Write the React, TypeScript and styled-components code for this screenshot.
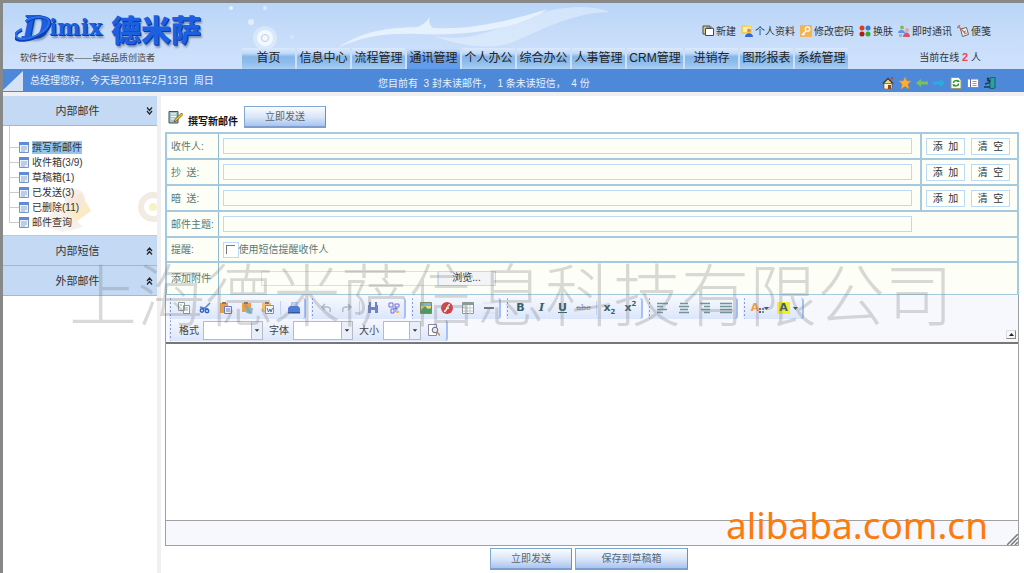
import React from "react";
import styled, { createGlobalStyle } from "styled-components";

const GlobalStyle = createGlobalStyle`
  * { box-sizing: border-box; }
  body {
    margin: 0;
    background: #fff;
    font-family: "Liberation Sans", "Noto Sans CJK SC", sans-serif;
    font-size: 10px;
    line-height: 15px;
    color: #333;
  }
  button, input, select, textarea { font: inherit; color: inherit; margin: 0; }
`;

/* ---------- frame ---------- */

const Page = styled.div`
  position: relative;
  display: flex;
  flex-direction: column;
  min-height: 100vh;
  border-top: 3px solid #888;
  border-left: 3px solid #888;
  background: #f0f0f2;
  overflow: hidden;
`;

const Header = styled.header`
  position: relative;
  display: flex;
  height: 66px;
  background: linear-gradient(#b9d5f8, #c6dcf9 45%, #cfe1fc);
`;

const HeaderArt = styled.svg`
  position: absolute;
  left: 220px;
  top: 0;
`;

const Brand = styled.div`
  width: 239px;
  padding: 4px 0 0 12px;
  flex: none;
`;

const LogoLine = styled.div`
  position: relative;
  display: flex;
  align-items: flex-start;
  height: 42px;
  color: #1c5fe0;
  text-shadow: 1px 1px 0 #0c3aa8, 2px 3px 2px #8093b4;
`;

const Swoosh = styled.svg`
  position: absolute;
  left: 0;
  top: 7px;
`;

const LogoInitial = styled.span`
  padding-left: 7px;
  font: italic bold 31px/40px "DejaVu Serif", serif;
`;

const LogoLatin = styled.span`
  font: bold 22px/40px "DejaVu Serif", serif;
`;

const LogoHan = styled.span`
  padding-left: 9px;
  font: 900 30px/42px "Noto Sans CJK SC", sans-serif;
`;

const Tagline = styled.div`
  padding-left: 5px;
  font-size: 9px;
  line-height: 19px;
  color: #444;
`;

const HeaderRight = styled.div`
  position: relative;
  flex: 1;
  display: flex;
  justify-content: space-between;
`;

const Nav = styled.nav`
  display: flex;
  align-items: flex-end;
  gap: 2px;
`;

const Tab = styled.a<{ $active?: boolean; $wide?: boolean }>`
  width: ${(p) => (p.$wide ? 56 : 53)}px;
  height: 21px;
  font-size: 12px;
  line-height: 20px;
  text-align: center;
  white-space: nowrap;
  text-decoration: none;
  color: #222;
  background: ${(p) =>
    p.$active
      ? "linear-gradient(#cfe2fb, #a9cbf5 22%, #6d9fe2 38%, #5e9aef)"
      : "linear-gradient(#dbe9fc, #c2dafa 25%, #86b6e9 42%, #8fbdec 70%, #a9cef4)"};
`;

const Tools = styled.div`
  display: flex;
  flex-direction: column;
  align-items: flex-end;
  padding: 20px 33px 0 0;
  position: absolute;
  right: 0;
  top: 0;
`;

const ToolRow = styled.div`
  display: flex;
  gap: 5px;
`;

const ToolLink = styled.a`
  display: flex;
  align-items: center;
  gap: 2px;
  height: 16px;
  color: #333;
  text-decoration: none;
  white-space: nowrap;
`;

const Online = styled.div`
  padding: 11px 10px 0 0;
  b { color: #f04050; font-size: 11px; }
`;

const StatusBar = styled.div`
  display: flex;
  align-items: center;
  height: 23px;
  background: #4e88d8;
  color: #e8f0fc;
`;

const Welcome = styled.span`
  width: 354px;
  padding: 0 0 1px 6px;
  white-space: pre;
`;

const Notice = styled.span`
  flex: 1;
  padding-top: 6px;
  white-space: pre;
`;

const QuickIcons = styled.div`
  display: flex;
  gap: 5px;
  padding: 4px 28px 0 0;
`;

const IconLink = styled.a`
  display: block;
  width: 12px;
  height: 12px;
`;

const Columns = styled.div`
  flex: 1;
  display: flex;
  gap: 4px;
  padding-top: 4px;
`;

/* ---------- sidebar ---------- */

const Side = styled.aside`
  flex: none;
  width: 154px;
  background: #fff;
`;

const SideHead = styled.button`
  display: flex;
  align-items: center;
  width: 100%;
  height: 30px;
  padding: 1px 4px 0 6px;
  border: 0;
  border-bottom: 1px solid #8fbcf2;
  background: #c3d9f4;
  font-size: 11px;
  color: #333;
  span { flex: 1; text-align: center; }
`;

const Tree = styled.ul`
  position: relative;
  height: 110px;
  margin: 0;
  padding: 14px 0 0 6px;
  list-style: none;
  border-bottom: 1px solid #a9cbf4;
  background: linear-gradient(#ccc, #ccc) 6px 0 / 1px 14px no-repeat;
`;

const TreeArt = styled.svg`
  position: absolute;
  right: 0;
  bottom: 0;
`;

const TreeItem = styled.li`
  position: relative;
  display: flex;
  align-items: center;
  height: 15px;
  background: linear-gradient(#ccc, #ccc) 0 0 / 1px 15px no-repeat;
  &:last-child { background-size: 1px 8px; }
  svg { flex: none; }
`;

const TreeLink = styled.a<{ $active?: boolean }>`
  margin-left: 3px;
  line-height: 13px;
  color: #333;
  text-decoration: none;
  white-space: nowrap;
  background: ${(p) => (p.$active ? "#94c5ec" : "transparent")};
`;

const Branch = styled.span`
  width: 10px;
  height: 1px;
  background: #ccc;
`;

/* ---------- compose form ---------- */

const Main = styled.main`
  flex: 1;
  min-width: 0;
  display: flex;
  flex-direction: column;
  padding: 0 5px 3px 4px;
  background: #fff;
`;

const TitleRow = styled.div`
  display: flex;
  align-items: center;
  height: 36px;
  padding: 6px 0 0 3px;
`;

const Title = styled.h1`
  margin: 0;
  padding: 8px 6px 0 5px;
  font-size: 10px;
  line-height: 15px;
  color: #111;
`;

const ActionButton = styled.button<{ $wide?: boolean }>`
  width: ${(p) => (p.$wide ? 113 : 82)}px;
  height: 22px;
  padding: 0;
  border: 1px solid #7fa9cf;
  border-right-color: #6a8fc4;
  border-bottom: 2px solid #7d9fd0;
  background: linear-gradient(#fafcff, #d8e4f8 55%, #a9c4f0);
  color: #567;
  line-height: 18px;
`;

const FormTable = styled.table`
  width: 100%;
  border-collapse: collapse;
  table-layout: fixed;
  border: 2px solid #a5c9de;
  border-bottom: 1px solid #a5c9de;
  background: #fdfff6;
  color: #567878;
`;

const Col = styled.col<{ $w?: number }>`
  width: ${(p) => (p.$w ? `${p.$w}px` : "auto")};
`;

const Row = styled.tr<{ $h: number }>`
  height: ${(p) => p.$h}px;
`;

const HeadCell = styled.th`
  padding: 0 0 0 4px;
  border: 1px solid #8dbdd3;
  border-top: 2px solid #a5c9de;
  font-weight: normal;
  text-align: left;
  white-space: pre;
`;

const Cell = styled.td<{ $actions?: boolean }>`
  padding: 0 ${(p) => (p.$actions ? 4 : 8)}px 0 4px;
  border-top: 2px solid #a5c9de;
  border-left: ${(p) => (p.$actions ? "2px solid #a5c9de" : "0")};
`;

const Flex = styled.div<{ $gap?: number }>`
  display: flex;
  align-items: center;
  gap: ${(p) => p.$gap ?? 0}px;
`;

const Field = styled.input<{ $inset?: boolean }>`
  display: block;
  width: ${(p) => (p.$inset ? "calc(100% - 97px)" : "100%")};
  height: 16px;
  padding: 0 3px;
  border: 1px solid #bcd9f5;
  border-radius: 0;
  background: transparent;
`;

const FileField = styled.input`
  width: 177px;
  height: 15px;
  margin-left: 38px;
  padding: 0 3px;
  border: 1px solid #cfe3f8;
  background: transparent;
`;

const BrowseButton = styled.button`
  width: 58px;
  height: 15px;
  padding: 0;
  border: 1px solid #c2daf3;
  background: #f3f4f6;
  color: #333;
  line-height: 12px;
`;

const SmallButton = styled.button`
  width: 39px;
  height: 17px;
  padding: 0;
  border: 1px solid #bcd9f5;
  background: #fdfff8;
  color: #333;
  line-height: 13px;
  white-space: pre;
`;

const CheckLabel = styled.label`
  display: flex;
  align-items: center;
`;

const Check = styled.input`
  appearance: none;
  width: 16px;
  height: 16px;
  border: 1px solid #bcd9f5;
  background:
    linear-gradient(#777, #777) 2px 2px / 9px 1px no-repeat,
    linear-gradient(#777, #777) 2px 2px / 1px 9px no-repeat,
    #fff;
  &:checked { background: #6a8fc4; }
`;

/* ---------- editor ---------- */

const Editor = styled.section`
  flex: 1;
  display: flex;
  flex-direction: column;
  border: 1px solid #a0a0a0;
  border-top: 0;
`;

const Toolbar = styled.div`
  position: relative;
  height: 49px;
  padding: 3px 0 0 3px;
  border-bottom: 2px solid #777;
  background: #f6f8fe;
`;

const ToolLine = styled.div`
  display: flex;
  gap: 5px;
  height: 22px;
`;

const Group = styled.div`
  display: flex;
  align-items: center;
  height: 21px;
  padding-left: 4px;
  border-right: 2px solid #a3c0f8;
  border-radius: 3px;
  background:
    radial-gradient(#7f9be8 1px, transparent 1px) 0 3px / 3px 4px repeat-y,
    linear-gradient(#f4f7fe, #dce6fb);
`;

const EditButton = styled.button<{ $w?: number }>`
  display: grid;
  place-items: center;
  width: ${(p) => p.$w ?? 21}px;
  height: 20px;
  padding: 0;
  border: 0;
  background: none;
  color: #3a5f6a;
`;

const Divider = styled.span`
  width: 1px;
  height: 14px;
  margin: 0 2px;
  background: #c0d2f4;
`;

const SelectLabel = styled.label`
  display: flex;
  align-items: center;
  gap: 4px;
  margin-left: 6px;
  color: #444;
`;

const SelectBox = styled.span<{ $w: number }>`
  display: grid;
  width: ${(p) => p.$w}px;
  height: 19px;
  border: 1px solid #b5bcc0;
  background: #fff;
  > * { grid-area: 1 / 1; }
  svg {
    justify-self: end;
    pointer-events: none;
    background: #e8eefa;
    border-left: 1px solid #b5bcc0;
  }
`;

const Select = styled.select`
  appearance: none;
  width: 100%;
  border: 0;
  background: transparent;
`;

const Collapse = styled.button`
  position: absolute;
  right: 2px;
  bottom: 3px;
  display: grid;
  place-items: center;
  width: 10px;
  height: 9px;
  padding: 0;
  border: 1px solid #ddd;
  border-right-color: #888;
  border-bottom-color: #888;
  background: #f6f6f6;
`;

const Body = styled.textarea`
  flex: 1;
  width: 100%;
  padding: 6px;
  border: 0;
  resize: none;
  outline: 0;
  background: #fff;
`;

const EditorFoot = styled.div`
  display: flex;
  justify-content: flex-end;
  align-items: flex-end;
  height: 25px;
  border-top: 1px solid #a0a0a0;
  background: #f6f8fe;
`;

const Actions = styled.div`
  display: flex;
  justify-content: center;
  gap: 3px;
  padding: 2px 6px 0 0;
`;

/* ---------- overlays ---------- */

const Watermark = styled.div`
  position: absolute;
  left: 66px;
  top: 244px;
  font: 300 68px/90px "Noto Sans CJK SC", sans-serif;
  color: rgba(125, 125, 125, 0.29);
  white-space: nowrap;
  pointer-events: none;
`;

const SiteMark = styled.div`
  position: absolute;
  right: 36px;
  bottom: 24px;
  font: 37px/48px "Noto Sans", sans-serif;
  color: #ff7a0a;
  pointer-events: none;
`;

/* ---------- icons ---------- */

const Ic = ({ s = 12, children }: { s?: number; children: React.ReactNode }) => (
  <svg width={s} height={s} viewBox="0 0 12 12" fill="none" aria-hidden="true">
    {children}
  </svg>
);

const icons = {
  create: (
    <Ic><path d="M1 1h7v8H1z" fill="#d9c79a" stroke="#544a35" /><path d="M3.5 3.5h8v7h-8z" fill="#fff" stroke="#4a4a4a" /><path d="M5 3V2h5v2" stroke="#777" /></Ic>
  ),
  profile: (
    <Ic><path d="M0 0h5l1 1h5v8H0z" fill="#f8cf50" /><path d="M2 2h8v5H2z" fill="#fdeeb0" /><circle cx="8" cy="5.500" r="2" fill="#d89050" /><path d="M4 12c0-5 8-5 8 0z" fill="#2e68d8" /></Ic>
  ),
  key: (
    <Ic><rect width="12" height="12" rx="1" fill="#f3b451" /><circle cx="7.5" cy="4" r="2.2" stroke="#fff" strokeWidth="1.3" /><path d="M6 6l-4 4M3 8.5l1.5 1.5" stroke="#fff" strokeWidth="1.4" /></Ic>
  ),
  skin: (
    <Ic><circle cx="3" cy="3" r="2.5" fill="#e23a20" /><circle cx="9" cy="3" r="2.5" fill="#2f78e0" /><circle cx="3" cy="9" r="2.5" fill="#b01c10" /><circle cx="9" cy="9" r="2.5" fill="#3aa82a" /></Ic>
  ),
  chat: (
    <Ic><circle cx="4" cy="2.5" r="2" fill="#86b95c" /><path d="M0 8c0-4 7-4 7 0z" fill="#5f93dd" /><circle cx="9" cy="5" r="2" fill="#e3a6a0" /><path d="M5 12c0-6 7-6 7 0z" fill="#d4576a" /><path d="M1 9h3v3H1z" fill="#9bb4e8" /></Ic>
  ),
  note: (
    <Ic><path d="M3.5 4l6-1.500 2 7-6 2z" fill="#f4f4ee" stroke="#666" /><path d="M1 1l7 7M3 0L0 3" stroke="#c86a62" strokeWidth="1.3" /><path d="M6 7l3-1M7 9l3-1" stroke="#888" /></Ic>
  ),
  home: (
    <Ic><path d="M2 6h8v6H2z" fill="#fff3cf" stroke="#55481c" strokeWidth=".6" /><path d="M0 6.500L6 .5l6 6z" fill="#463a25" /><path d="M2.500 6L6 2.500 9.500 6z" fill="#f2d884" /><path d="M9 0h2v3L9 1.500z" fill="#d23a28" /><path d="M6 8h3v4H6z" fill="#8c4a1c" /></Ic>
  ),
  star: (
    <Ic><path d="M6 0l1.800 4H12L8.800 7l1.200 5L6 9.200 2 12l1.200-5L0 4h4.200z" fill="#ffad33" stroke="#e98c1a" strokeWidth=".5" /></Ic>
  ),
  back: <Ic><path d="M0 6l5-4v2.500h7v3H5V10z" fill="#7ac15d" /></Ic>,
  forward: <Ic><path d="M12 6L7 2v2.500H0v3h7V10z" fill="#2bacdc" /></Ic>,
  refresh: (
    <Ic><path d="M1 .5h7.500L11 3v8.500H1z" fill="#fff" stroke="#999a70" /><path d="M3.500 6C3.500 3 8 3 8 5M8.500 6.500C8.500 9.500 4 9.500 4 7.500" stroke="#2a9a30" strokeWidth="1.500" /><path d="M6.500 5H10L8 2.500zM2 7.500h3.500L4 10z" fill="#2a9a30" /></Ic>
  ),
  list: (
    <Ic><path d="M.5 2h11v8.500H.5z" fill="#fff" stroke="#7b84c8" /><path d="M3.500 2v8" stroke="#5c66b0" /><path d="M5.500 4.500h4M5.500 6.500h4M5.500 8.500h4" stroke="#777" strokeWidth=".8" /></Ic>
  ),
  exit: (
    <Ic><path d="M6 1l5-1v11l-5 1z" fill="#2aa0a0" stroke="#114e58" strokeWidth=".8" /><path d="M0 10h6M1 7l4-1 1-3M3 3.500h3" stroke="#153f4a" strokeWidth="1.400" /><circle cx="4" cy="1.800" r="1.300" fill="#153f4a" /></Ic>
  ),
  page: (
    <svg width="10" height="11" viewBox="0 0 10 11" aria-hidden="true"><path d="M.5.5h9v10h-9z" fill="#e9f2fd" stroke="#7594cc" /><path d="M0 0h10v3H0z" fill="#5f8ad8" /><path d="M2 5h6M2 7h6M2 9h4" stroke="#90a9c8" /></svg>
  ),
  compose: (
    <svg width="15" height="15" viewBox="0 0 15 15" aria-hidden="true"><path d="M1 1.500h9V13H1z" fill="#a6c3c8" stroke="#3c5458" /><path d="M3 4h5M3 6.500h5M3 9h4" stroke="#fff" /><path d="M13.500 3L7 9.500 6 12l2.500-1L15 4.500z" fill="#f3c433" stroke="#554510" strokeWidth=".7" /></svg>
  ),
  copy: <Ic><path d="M.5.5h6v8h-6zM5.500 3.500h6v8h-6z" fill="#fafafa" stroke="#8a9a94" /><path d="M7 6h3M7 8h3M2 3h2" stroke="#9aa" /></Ic>,
  cut: <Ic><path d="M11 1L4 8M1 5l8 2" stroke="#5b84d4" strokeWidth="1.500" /><circle cx="3" cy="8.500" r="1.700" stroke="#2f63c8" strokeWidth="1.500" /><circle cx="8" cy="9" r="1.700" stroke="#2f63c8" strokeWidth="1.500" /></Ic>,
  paste: <Ic><path d="M0 1h8v10H0z" fill="#e8a04c" /><path d="M2 0h4v2H2z" fill="#a77334" /><path d="M4.500 4.500h7v7h-7z" fill="#eef2fd" stroke="#6a79b8" /><path d="M6 7h4M6 9h4" stroke="#6a79b8" /></Ic>,
  pasteText: <Ic><path d="M1 1h9v9H1z" fill="#e8a04c" /><path d="M3 0h4v2H3z" fill="#a77334" /><path d="M5 5l7 1-1 6-6-1z" fill="#8cb8c0" /></Ic>,
  pasteWord: <Ic><path d="M0 1h9v9H0z" fill="#f0bf77" /><path d="M3 0h4v2H3z" fill="#a77334" /><path d="M3.500 3.500h8v8h-8z" fill="#eef6fb" stroke="#7d98a4" /><path d="M5 6l1.500 4L8 7l1 3 1.500-4" stroke="#4f7690" /></Ic>,
  print: <Ic><path d="M4 0h5v5H3z" fill="#c8d8f4" stroke="#7b98d0" strokeWidth=".6" /><path d="M0 6l2-2h8l2 2v4H0z" fill="#4a7de0" /><path d="M0 10h12v1.500H0z" fill="#2f56a8" /></Ic>,
  undo: <Ic><path d="M2 5h5c3 0 4 2 3 5M5 2L2 5l3 3" stroke="#a9bcc4" strokeWidth="1.500" /></Ic>,
  redo: <Ic><path d="M10 5H5C2 5 1 7 2 10M7 2l3 3-3 3" stroke="#a9bcc4" strokeWidth="1.500" /></Ic>,
  find: <Ic><path d="M1 3h3v8H1zM8 3h3v8H8zM4 5h4v3H4zM2 0h2v3H2zM8 0h2v3H8z" fill="#6f82c8" /></Ic>,
  replace: <Ic><path d="M1 1h4v4H1zM7 2h4v3H7zM3 7h3v4H3z" stroke="#7b6fd0" /><path d="M5 6l5 1M8 5v5" stroke="#5a7bd0" /><path d="M8 9h3v2H8z" fill="#f0b860" /></Ic>,
  image: <Ic><path d="M.5.5h11v11H.5z" fill="#f3d47c" stroke="#7d8a60" /><path d="M1 8l4-4 3 3 3-1v5H1z" fill="#4d9a5c" /><path d="M1 1h10v3H1z" fill="#7ab6d8" /></Ic>,
  flash: <Ic><circle cx="6" cy="6" r="6" fill="#d04444" /><path d="M9 2.500C6 2.500 6.500 9 3 9.500M5 6h3" stroke="#fff" strokeWidth="1.500" /></Ic>,
  table: <Ic><path d="M.5.5h11v11H.5z" fill="#fff" stroke="#8a9a94" /><path d="M0 1h12v2H0z" fill="#8a9a94" /><path d="M4 3v9M8 3v9M1 6h10M1 9h10" stroke="#c0cacc" /></Ic>,
  rule: <Ic><path d="M1 6h10" stroke="#777" strokeWidth="2" /><path d="M0 1h12M0 11h12" stroke="#dde" /></Ic>,
  left: <Ic><path d="M0 1.500h11M0 4.500h6M0 7.500h10M0 10.500h6" stroke="#6f9497" strokeWidth="1.500" /></Ic>,
  center: <Ic><path d="M2 1.500h8M1 4.500h10M2 7.500h8M1 10.500h10" stroke="#6f9497" strokeWidth="1.500" /></Ic>,
  right: <Ic><path d="M1 1.500h10M5 4.500h6M2 7.500h9M5 10.500h6" stroke="#6f9497" strokeWidth="1.500" /></Ic>,
  justify: <Ic><path d="M0 1.500h12M0 4.500h12M0 7.500h12M0 10.500h12" stroke="#6f9497" strokeWidth="1.500" /></Ic>,
  preview: <Ic><path d="M.5.5h8v11h-8z" fill="#fff" stroke="#889" /><circle cx="7" cy="6" r="2.800" fill="#dfe9f2" stroke="#667" /><path d="M9 8l3 3.500" stroke="#c88a50" strokeWidth="1.500" /></Ic>,
};

const Caret = ({ w = 5 }: { w?: number }) => (
  <svg width={w} height="3" viewBox="0 0 5 3" aria-hidden="true"><path d="M0 0h5L2.500 3z" fill="#444" /></svg>
);

const Chevrons = ({ up }: { up?: boolean }) => (
  <svg width="7" height="8" viewBox="0 0 7 8" fill="none" stroke="#222" strokeWidth="1.200" aria-hidden="true">
    <path d={up ? "M1 4l2.500-3L6 4M1 7.500l2.500-3L6 7.500" : "M1 .5l2.500 3L6 .5M1 4l2.500 3L6 4"} />
  </svg>
);

const Letter = styled.span<{ $look?: "italic" | "under" | "strike" | "mark" | "color" }>`
  font: bold 11px/14px "DejaVu Sans", sans-serif;
  ${(p) => p.$look === "italic" && `font: italic bold 11px/14px "DejaVu Serif", serif;`}
  ${(p) => p.$look === "under" && "text-decoration: underline;"}
  ${(p) => p.$look === "strike" && `font: 8px/14px "DejaVu Serif", serif; text-decoration: line-through; color: #889;`}
  ${(p) => p.$look === "mark" && "background: #f3ee2c; padding: 0 2px; line-height: 12px;"}
  ${(p) => p.$look === "color" && "color: #f0a040;"}
  sub, sup { font-size: 7px; line-height: 0; }
`;

/* ---------- data ---------- */

const tabs = ["首页", "信息中心", "流程管理", "通讯管理", "个人办公", "综合办公", "人事管理", "CRM管理", "进销存", "图形报表", "系统管理"];

const tools: [React.ReactNode, string][] = [
  [icons.create, "新建"],
  [icons.profile, "个人资料"],
  [icons.key, "修改密码"],
  [icons.skin, "换肤"],
  [icons.chat, "即时通讯"],
  [icons.note, "便笺"],
];

const quick: [React.ReactNode, string][] = [
  [icons.home, "主页"],
  [icons.star, "收藏"],
  [icons.back, "后退"],
  [icons.forward, "前进"],
  [icons.refresh, "刷新"],
  [icons.list, "列表"],
  [icons.exit, "退出"],
];

const folders = ["撰写新邮件", "收件箱(3/9)", "草稿箱(1)", "已发送(3)", "已删除(11)", "邮件查询"];

const recipients = [
  { id: "to", label: "收件人:" },
  { id: "cc", label: "抄  送:" },
  { id: "bcc", label: "暗  送:" },
];

const Picker = ({ label, w }: { label: string; w: number }) => (
  <SelectLabel>
    {label}
    <SelectBox $w={w}>
      <Select><option> </option></Select>
      <svg width="11" height="17" viewBox="0 0 11 17" aria-hidden="true"><path d="M3 7h5L5.500 10z" fill="#333" /></svg>
    </SelectBox>
  </SelectLabel>
);

const Tool = ({ name, w, children }: { name: string; w?: number; children: React.ReactNode }) => (
  <EditButton type="button" aria-label={name} $w={w}>{children}</EditButton>
);

export default function App() {
  return (
    <Page>
      <GlobalStyle />
      <Header>
        <HeaderArt width="400" height="66" viewBox="220 3 400 66" fill="#eaf3fe" aria-hidden="true">
          <path d="M334 48C365 28 390 28 415 27Q426 22 429 12Q423 22 430 28C470 30 505 21 545 9C510 31 460 36 415 34C380 33 360 37 334 48z" opacity=".9" />
          <path d="M430 36C480 44 500 22 540 12C570 5 590 6 607 12C570 13 545 27 510 42C490 50 460 47 430 36z" opacity=".5" />
          <circle cx="262" cy="38" r="12" opacity=".5" />
          <circle cx="262" cy="38" r="8" fill="#fff" opacity=".7" />
          <circle cx="262" cy="38" r="3.500" fill="none" stroke="#b4d0f4" />
          <circle cx="248" cy="22" r="3" opacity=".8" />
          <circle cx="228" cy="8" r="2" />
          <circle cx="262" cy="8" r="2" opacity=".7" />
          <circle cx="289" cy="37" r="2" opacity=".4" />
        </HeaderArt>
        <Brand>
          <LogoLine>
            <Swoosh width="38" height="30" viewBox="0 0 38 30" fill="none" aria-hidden="true">
              <path d="M7 16C-2 20-2 27 9 26C21 25 34 17 35 10C36 2 20 1 11 8" stroke="#0e3fae" strokeWidth="3.500" />
              <path d="M7 15C-2 19-1 25 9 25C20 24 33 16 34 9C35 2 20 1 11 7" stroke="#2c70ee" strokeWidth="2" />
            </Swoosh>
            <LogoInitial>D</LogoInitial>
            <LogoLatin>imix</LogoLatin>
            <LogoHan>德米萨</LogoHan>
          </LogoLine>
          <Tagline>软件行业专家——卓越品质创造者</Tagline>
        </Brand>
        <HeaderRight>
          <Nav>
            {tabs.map((t) => (
              <Tab key={t} href="#" $active={t === "通讯管理"} $wide={t === "CRM管理"}>{t}</Tab>
            ))}
          </Nav>
          <Tools>
            <ToolRow>
              {tools.map(([icon, text]) => (
                <ToolLink key={text} href="#">{icon}{text}</ToolLink>
              ))}
            </ToolRow>
            <Online>当前在线 <b>2</b> 人</Online>
          </Tools>
        </HeaderRight>
      </Header>

      <StatusBar>
        <svg width="21" height="21" viewBox="0 0 21 21" aria-hidden="true"><path d="M0 20L20 1v20H0z" fill="#d5e2f6" /></svg>
        <Welcome>总经理您好，今天是2011年2月13日  周日</Welcome>
        <Notice>您目前有  3 封未读邮件，  1 条未读短信，  4 份</Notice>
        <QuickIcons>
          {quick.map(([icon, text]) => (
            <IconLink key={text} href="#" aria-label={text}>{icon}</IconLink>
          ))}
        </QuickIcons>
      </StatusBar>

      <Columns>
        <Side>
          <SideHead type="button"><span>内部邮件</span><Chevrons /></SideHead>
          <Tree>
            <TreeArt width="118" height="50" viewBox="0 0 118 50" aria-hidden="true">
              <path d="M20 22l22-14 10 18-22 16z" fill="#fbe3b8" opacity=".8" />
              <path d="M0 40l22-20 22 22-20 5z" fill="#f3efe9" opacity=".8" />
              <circle cx="36" cy="14" r="10" fill="#f4e6e0" opacity=".7" />
              <circle cx="114" cy="22" r="12" fill="none" stroke="#f1ebe4" strokeWidth="6" />
              <circle cx="114" cy="22" r="4" fill="#f8f3c4" />
            </TreeArt>
            {folders.map((f, i) => (
              <TreeItem key={f}>
                <Branch />
                {icons.page}
                <TreeLink href="#" $active={i === 0}>{f}</TreeLink>
              </TreeItem>
            ))}
          </Tree>
          <SideHead type="button"><span>内部短信</span><Chevrons up /></SideHead>
          <SideHead type="button"><span>外部邮件</span><Chevrons up /></SideHead>
        </Side>

        <Main>
          <TitleRow>
            {icons.compose}
            <Title>撰写新邮件</Title>
            <ActionButton type="button">立即发送</ActionButton>
          </TitleRow>

          <FormTable>
            <colgroup>
              <Col $w={52} />
              <Col />
              <Col $w={97} />
            </colgroup>
            <tbody>
              {recipients.map((r) => (
                <Row key={r.id} $h={26}>
                  <HeadCell scope="row"><label htmlFor={r.id}>{r.label}</label></HeadCell>
                  <Cell><Field id={r.id} /></Cell>
                  <Cell $actions>
                    <Flex $gap={6}>
                      <SmallButton type="button">添  加</SmallButton>
                      <SmallButton type="button">清  空</SmallButton>
                    </Flex>
                  </Cell>
                </Row>
              ))}
              <Row $h={26}>
                <HeadCell scope="row"><label htmlFor="subject">邮件主题:</label></HeadCell>
                <Cell colSpan={2}><Field id="subject" $inset /></Cell>
              </Row>
              <Row $h={25}>
                <HeadCell scope="row">提醒:</HeadCell>
                <Cell colSpan={2}>
                  <CheckLabel><Check type="checkbox" />使用短信提醒收件人</CheckLabel>
                </Cell>
              </Row>
              <Row $h={32}>
                <HeadCell scope="row"><label htmlFor="file">添加附件</label></HeadCell>
                <Cell colSpan={2}>
                  <Flex><FileField id="file" /><BrowseButton type="button">浏览...</BrowseButton></Flex>
                </Cell>
              </Row>
            </tbody>
          </FormTable>

          <Editor>
            <Toolbar>
              <ToolLine>
                <Group>
                  <Tool name="复制">{icons.copy}</Tool>
                  <Tool name="剪切">{icons.cut}</Tool>
                  <Tool name="粘贴">{icons.paste}</Tool>
                  <Tool name="粘贴文本">{icons.pasteText}</Tool>
                  <Tool name="从Word粘贴">{icons.pasteWord}</Tool>
                  <Divider />
                  <Tool name="打印">{icons.print}</Tool>
                </Group>
                <Group>
                  <Tool name="撤销">{icons.undo}</Tool>
                  <Tool name="重做">{icons.redo}</Tool>
                  <Divider />
                  <Tool name="查找">{icons.find}</Tool>
                  <Tool name="替换">{icons.replace}</Tool>
                </Group>
                <Group>
                  <Tool name="图片">{icons.image}</Tool>
                  <Tool name="动画">{icons.flash}</Tool>
                  <Tool name="表格">{icons.table}</Tool>
                  <Tool name="水平线">{icons.rule}</Tool>
                </Group>
                <Group>
                  <Tool name="加粗"><Letter>B</Letter></Tool>
                  <Tool name="斜体"><Letter $look="italic">I</Letter></Tool>
                  <Tool name="下划线"><Letter $look="under">U</Letter></Tool>
                  <Tool name="删除线"><Letter $look="strike">abc</Letter></Tool>
                  <Divider />
                  <Tool name="下标"><Letter>x<sub>2</sub></Letter></Tool>
                  <Tool name="上标"><Letter>x<sup>2</sup></Letter></Tool>
                </Group>
                <Group>
                  <Tool name="左对齐">{icons.left}</Tool>
                  <Tool name="居中">{icons.center}</Tool>
                  <Tool name="右对齐">{icons.right}</Tool>
                  <Tool name="两端对齐">{icons.justify}</Tool>
                </Group>
                <Group>
                  <Tool name="文字颜色" w={26}>
                    <Flex>
                      <Letter $look="color">A</Letter>
                      <svg width="5" height="10" viewBox="0 0 5 10" aria-hidden="true"><path d="M0 5h2v2H0z" fill="#e04848" /><path d="M3 5h2v2H3z" fill="#4a90e0" /><path d="M0 8h2v2H0z" fill="#8040c0" /><path d="M3 8h2v2H3z" fill="#50b050" /></svg>
                      <Caret />
                    </Flex>
                  </Tool>
                  <Tool name="背景颜色" w={29}>
                    <Flex $gap={3}><Letter $look="mark">A</Letter><Caret /></Flex>
                  </Tool>
                </Group>
              </ToolLine>
              <ToolLine>
                <Group>
                  <Picker label="格式" w={60} />
                  <Picker label="字体" w={60} />
                  <Picker label="大小" w={38} />
                  <Tool name="预览" w={25}>{icons.preview}</Tool>
                </Group>
              </ToolLine>
              <Collapse type="button" aria-label="折叠工具栏">
                <svg width="5" height="3" viewBox="0 0 5 3" aria-hidden="true"><path d="M0 3h5L2.500 0z" fill="#222" /></svg>
              </Collapse>
            </Toolbar>
            <Body aria-label="邮件正文" />
            <EditorFoot>
              <svg width="11" height="11" viewBox="0 0 11 11" fill="none" aria-hidden="true"><path d="M0 11L11 0M4 11l7-7M8 11l3-3" stroke="#777" strokeWidth="1.500" /></svg>
            </EditorFoot>
          </Editor>

          <Actions>
            <ActionButton type="button">立即发送</ActionButton>
            <ActionButton type="button" $wide>保存到草稿箱</ActionButton>
          </Actions>
        </Main>
      </Columns>

      <Watermark>上海德米萨信息科技有限公司</Watermark>
      <SiteMark>alibaba.com.cn</SiteMark>
    </Page>
  );
}
